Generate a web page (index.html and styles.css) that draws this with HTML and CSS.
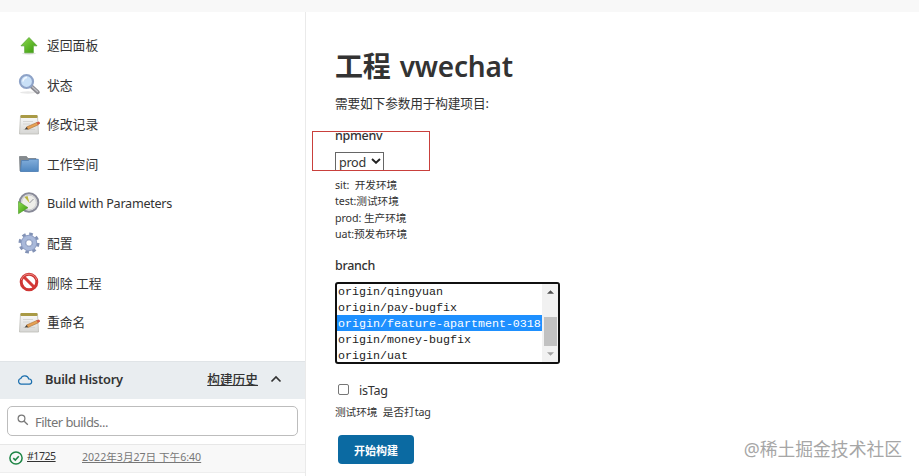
FILE: index.html
```html
<!DOCTYPE html>
<html lang="zh-CN">
<head>
    <meta charset="UTF-8">
    <meta name="viewport" content="width=device-width, initial-scale=1.0">
    <title>vwechat [Jenkins]</title>
    <link rel="stylesheet" href="styles.css">
</head>
<body>
    <!-- 渐变和公用图标 -->
    <svg class="defs" width="0" height="0">
        <defs>
            <linearGradient id="green" x1="0" y1="0" x2="1" y2="1">
                <stop offset="0" stop-color="#8fdc50"/>
                <stop offset="1" stop-color="#37980a"/>
            </linearGradient>
            <linearGradient id="blue" x1="0" y1="0" x2="0" y2="1">
                <stop offset="0" stop-color="#82aedb"/>
                <stop offset="1" stop-color="#4f86bf"/>
            </linearGradient>
            <linearGradient id="paper" x1="0" y1="0" x2="0" y2="1">
                <stop offset="0" stop-color="#fafafa"/>
                <stop offset="1" stop-color="#d6d6d4"/>
            </linearGradient>
            <symbol id="notepad" viewBox="0 0 24 24">
                <path d="M3.500 4h17l1 18h-19z" fill="url(#paper)" stroke="#bcbcb8" stroke-width=".8"/>
                <rect x="3.500" y="3" width="17" height="3" rx=".8" fill="#a99a45"/>
                <path d="M6 9.500h10M6 12h7M6 17.500h12" stroke="#cfcfcd" stroke-width=".8"/>
                <path d="M9.500 15l10.500-4.600 1.300 2.400-10.500 4.700z" fill="#e6a153" stroke="#a86b30" stroke-width=".6"/>
                <path d="M19.500 10.500l2.200-1q1.400.6 1.300 2.200l-2.100 1z" fill="#d35a45"/>
                <path d="M7.500 17.600l2.200-2.500 1.300 2.200z" fill="#44403a"/>
            </symbol>
        </defs>
    </svg>

    <div class="header"></div>

    <div class="page">
        <!-- 侧边栏 -->
        <div class="side-panel">
            <div class="tasks">
                <a class="task">
                    <svg class="task-icon" viewBox="0 0 24 24">
                        <ellipse cx="12" cy="20.500" rx="7" ry="1.200" fill="#e2e2e2"/>
                        <path d="M12 4.500l8 8.300h-3.700v7H7.700v-7H4z" fill="url(#green)" stroke="#58a534" stroke-width=".8"/>
                    </svg>
                    <span>返回面板</span>
                </a>
                <a class="task">
                    <svg class="task-icon" viewBox="0 0 24 24">
                        <ellipse cx="11" cy="20.500" rx="8" ry="1.200" fill="#e8e8e8"/>
                        <path d="M14.500 14.500l6.300 5.700" stroke="#8b8b91" stroke-width="4" stroke-linecap="round"/>
                        <path d="M15.500 15l5 4.600" stroke="#c2c2c8" stroke-width="1.300" stroke-linecap="round"/>
                        <circle cx="9.500" cy="9.500" r="6.500" fill="#c9e0f7" stroke="#8ea3c8" stroke-width="2.200"/>
                        <path d="M6 9.500a4 4 0 0 1 4-4" stroke="#f2f8ff" stroke-width="1.500" fill="none"/>
                    </svg>
                    <span>状态</span>
                </a>
                <a class="task">
                    <svg class="task-icon"><use href="#notepad"/></svg>
                    <span>修改记录</span>
                </a>
                <a class="task">
                    <svg class="task-icon" viewBox="0 0 24 24">
                        <path d="M2.500 4.500h7l1.500 2h8V19h-16z" fill="#858a8e" stroke="#70767a" stroke-width=".7"/>
                        <path d="M4.500 8.500h7l1-1.200h8.800V19.500H3.500z" fill="url(#blue)" stroke="#4b7eb5" stroke-width=".8"/>
                    </svg>
                    <span>工作空间</span>
                </a>
                <a class="task">
                    <svg class="task-icon" viewBox="0 0 24 24">
                        <circle cx="12" cy="11.500" r="9.300" fill="#eeeeea" stroke="#888a98" stroke-width="2"/>
                        <circle cx="12" cy="11.500" r="7.400" fill="none" stroke="#c8c9ce" stroke-width="1"/>
                        <path d="M12.500 12L7.500 6l3-1z" fill="#b9b43b"/>
                        <path d="M12.500 12l4-4" stroke="#92939a" stroke-width="1"/>
                        <path d="M1.500 10.500l9.500 6.200-9.500 6z" fill="url(#green)" stroke="#4b9c28" stroke-width=".6"/>
                    </svg>
                    <span class="latin">Build with Parameters</span>
                </a>
                <a class="task">
                    <svg class="task-icon" viewBox="0 0 24 24">
                        <circle cx="12" cy="12" r="9" fill="none" stroke="#8292b5" stroke-width="3" stroke-dasharray="3.530 3.530"/>
                        <circle cx="12" cy="12" r="5.700" fill="none" stroke="#8f9fc4" stroke-width="5.200"/>
                        <circle cx="12" cy="12" r="5.500" fill="none" stroke="#a9b9da" stroke-width="3.500"/>
                        <circle cx="12" cy="12" r="3.200" fill="#fff" stroke="#8293b9" stroke-width=".8"/>
                    </svg>
                    <span>配置</span>
                </a>
                <a class="task">
                    <svg class="task-icon" viewBox="0 0 24 24">
                        <circle cx="12" cy="12" r="7.800" fill="#fff" stroke="#cf3634" stroke-width="3"/>
                        <path d="M6.500 6.500l11 11" stroke="#d43a38" stroke-width="3"/>
                        <path d="M4.300 10a8 8 0 0 1 15.400 0" fill="none" stroke="#e98780" stroke-width="1"/>
                    </svg>
                    <span>删除 工程</span>
                </a>
                <a class="task">
                    <svg class="task-icon"><use href="#notepad"/></svg>
                    <span>重命名</span>
                </a>
            </div>

            <!-- 构建历史 -->
            <div class="history-header">
                <svg class="cloud" viewBox="0 0 16 12">
                    <path d="M4.200 10.200a2.900 2.900 0 0 1-.4-5.700A4.200 4.200 0 0 1 11.800 5a2.600 2.600 0 0 1 .5 5.200z" fill="none" stroke="#1b6fae" stroke-width="1.200"/>
                </svg>
                <span class="history-title">Build History</span>
                <a class="trend">构建历史</a>
                <svg class="chevron" viewBox="0 0 12 8">
                    <path d="M1.500 6.500L6 2l4.500 4.500" fill="none" stroke="#333" stroke-width="1.700"/>
                </svg>
            </div>
            <div class="search-row">
                <div class="search-box">
                    <svg class="search-icon" viewBox="0 0 12 12">
                        <circle cx="4.500" cy="4.500" r="3.400" fill="none" stroke="#777" stroke-width="1.200"/>
                        <path d="M7.200 7.200l3.600 3.600" stroke="#777" stroke-width="1.300"/>
                    </svg>
                    <input class="search-input" type="text" placeholder="Filter builds...">
                </div>
            </div>
            <div class="build-row">
                <svg class="status" viewBox="0 0 14 14">
                    <circle cx="7" cy="7" r="6.100" fill="none" stroke="#1d8545" stroke-width="1.500"/>
                    <path d="M4.300 7.100l2 1.900 3.500-3.800" fill="none" stroke="#1d8545" stroke-width="1.600"/>
                </svg>
                <a class="build-number">#1725</a>
                <a class="build-date">2022年3月27日 下午6:40</a>
            </div>
        </div>

        <!-- 主内容 -->
        <div class="main-panel">
            <h1>工程 vwechat</h1>
            <p class="intro">需要如下参数用于构建项目:</p>

            <div class="param-name npmenv">npmenv</div>
            <div class="select">
                <span>prod</span>
                <svg class="select-arrow" viewBox="0 0 10 6">
                    <path d="M1 1l4 3.800L9 1" fill="none" stroke="#222" stroke-width="1.900"/>
                </svg>
            </div>
            <div class="description env-list">
                <div>sit:&nbsp; 开发环境</div>
                <div>test:测试环境</div>
                <div>prod: 生产环境</div>
                <div>uat:预发布环境</div>
            </div>

            <div class="param-name branch">branch</div>
            <div class="listbox">
                <div class="options">
                    <div class="option">origin/qingyuan</div>
                    <div class="option">origin/pay-bugfix</div>
                    <div class="option selected">origin/feature-apartment-0318</div>
                    <div class="option">origin/money-bugfix</div>
                    <div class="option">origin/uat</div>
                </div>
                <div class="scrollbar">
                    <svg class="scroll-arrow" viewBox="0 0 8 4"><path d="M0 4l4-4 4 4z" fill="#505050"/></svg>
                    <div class="thumb"></div>
                    <svg class="scroll-arrow" viewBox="0 0 8 4"><path d="M0 0h8L4 4z" fill="#a3a3a3"/></svg>
                </div>
            </div>

            <div class="checkbox-container">
                <input type="checkbox" id="is-tag">
                <label for="is-tag">isTag</label>
            </div>
            <div class="description tag-note">测试环境&nbsp; 是否打tag</div>

            <button class="build-btn">开始构建</button>

            <div class="mark"></div>
        </div>
    </div>

    <div class="watermark">@稀土掘金技术社区</div>
</body>
</html>
```

FILE: styles.css
```css
/* 初始化 */
* {
    margin: 0;
    padding: 0;
    box-sizing: border-box;
}

body {
    position: relative;
    height: 476px;
    overflow: hidden;
    background-color: #fff;
    color: #333;
    font-family: "Noto Sans", "Noto Sans CJK SC", sans-serif;
    font-size: 13px;
}

svg {
    display: block;
    flex: none;
}

.defs {
    position: absolute;
}

.header {
    height: 12px;
    background-color: #f8f8f8;
}

.page {
    display: flex;
    height: 464px;
}

/* 侧边栏 */
.side-panel {
    width: 306px;
    border-right: 1px solid #eaeaea;
}

.tasks {
    height: 349px;
    padding-top: 13px;
}

.task {
    display: flex;
    align-items: center;
    gap: 6px;
    height: 39.6px;
    padding-left: 17px;
    font-size: 12.8px;
    white-space: nowrap;
}

.task-icon {
    width: 24px;
    height: 24px;
}

.latin {
    padding-top: 1px;
    font-size: 12.6px;
    letter-spacing: -0.27px;
}

/* 构建历史标题 */
.history-header {
    display: flex;
    align-items: center;
    height: 38px;
    padding: 0 23px 4px 17px;
    background-color: #e9edf0;
    border-top: 1px solid #e0e4e7;
}

.cloud {
    width: 16px;
    height: 12px;
    margin-top: 3px;
}

.history-title {
    margin-left: 12px;
    font-size: 12.8px;
    font-weight: 600;
    letter-spacing: -0.2px;
}

.trend {
    margin-left: auto;
    padding-bottom: 1px;
    font-size: 12.7px;
    font-weight: 500;
    text-decoration: underline;
}

.chevron {
    width: 12px;
    height: 8px;
    margin-left: 12px;
    margin-top: 1px;
}

/* 搜索框 */
.search-row {
    height: 45px;
    padding: 7px 7px 0;
}

.search-box {
    display: flex;
    align-items: center;
    height: 30px;
    padding-left: 9px;
    border: 1px solid #bdbdbd;
    border-radius: 5px;
}

.search-icon {
    width: 12px;
    height: 12px;
    margin-top: -2px;
}

.search-input {
    margin: 1px 0 0 6px;
    width: 200px;
    border: none;
    outline: none;
    background: transparent;
    font-family: inherit;
    font-size: 13px;
    letter-spacing: -0.55px;
}

.search-input::placeholder {
    color: #767676;
}

.build-row {
    display: flex;
    align-items: center;
    height: 29px;
    padding: 0 0 5px 9px;
    background-color: #f8f8f8;
    border-top: 1px solid #e7e7e7;
    border-bottom: 1px solid #eee;
    font-size: 10.6px;
}

.status {
    width: 14px;
    height: 14px;
    margin-top: 4px;
}

.build-number {
    width: 55px;
    margin-left: 4px;
    text-decoration: underline;
    letter-spacing: -0.5px;
}

.build-date {
    color: #777;
    text-decoration: underline;
    white-space: nowrap;
}

/* 主内容 */
.main-panel {
    position: relative;
    flex: 1;
    padding: 32px 0 0 29px;
}

h1 {
    height: 44px;
    font-size: 28px;
    font-weight: 600;
    line-height: 44px;
    letter-spacing: -0.2px;
    word-spacing: 2px;
}

.intro {
    height: 27px;
    margin-top: 2px;
    font-size: 12.7px;
    line-height: 27px;
    letter-spacing: -0.15px;
}

.param-name {
    height: 20px;
    font-size: 12.5px;
    font-weight: 500;
    line-height: 20px;
    letter-spacing: -0.3px;
}

.npmenv {
    margin-top: 9px;
}

.select {
    display: flex;
    align-items: center;
    gap: 5px;
    width: 49px;
    height: 19px;
    margin-top: 6px;
    padding-left: 3px;
    border: 1px solid #666;
    border-bottom: none;
    font-size: 12.6px;
    letter-spacing: -0.3px;
}

.select-arrow {
    width: 10px;
    height: 6px;
    margin-top: -2px;
}

.description {
    font-size: 10.7px;
    line-height: 16.3px;
    letter-spacing: -0.08px;
}

.env-list {
    margin-top: 6px;
}

.branch {
    margin-top: 14px;
}

/* 分支列表 */
.listbox {
    display: flex;
    width: 225px;
    height: 82px;
    margin-top: 6px;
    border: 2px solid #101010;
    border-radius: 3px;
    overflow: hidden;
}

.options {
    flex: 1;
    margin-top: -1px;
    font-family: "Liberation Mono", monospace;
    font-size: 11.67px;
    color: #222;
}

.option {
    height: 16px;
    padding-left: 1px;
    line-height: 18px;
    white-space: nowrap;
}

.option.selected {
    background-color: #1e90ff;
    color: #fff;
}

.scrollbar {
    display: flex;
    flex-direction: column;
    align-items: center;
    width: 16px;
    padding: 6px 0 6px;
    background-color: #f1f1f1;
}

.scroll-arrow {
    width: 7px;
    height: 4px;
}

.thumb {
    width: 13px;
    height: 29px;
    margin: auto 0 6px;
    background-color: #c1c1c1;
}

.checkbox-container {
    display: flex;
    align-items: center;
    height: 20px;
    margin-top: 16px;
    font-size: 12.6px;
    letter-spacing: -0.3px;
}

.checkbox-container input {
    appearance: none;
    width: 11px;
    height: 11px;
    margin: -2px 10px 0 3px;
    border: 1px solid #767676;
    border-radius: 2px;
}

.tag-note {
    margin-top: 4px;
}

/* 构建按钮 */
.build-btn {
    display: block;
    width: 76px;
    height: 29px;
    margin: 15px 0 0 3px;
    border: none;
    border-radius: 4px;
    background-color: #0b6aa2;
    color: #fff;
    font-family: inherit;
    font-size: 11px;
    font-weight: 700;
}

/* 红色标注框 */
.mark {
    position: absolute;
    left: 6px;
    top: 119px;
    width: 118px;
    height: 40px;
    border: 1px solid #c9403c;
}

/* 水印 */
.watermark {
    position: absolute;
    right: 17px;
    bottom: 15px;
    color: #a6a6a6;
    font-size: 17.8px;
    font-weight: 400;
    line-height: 24px;
}
```
